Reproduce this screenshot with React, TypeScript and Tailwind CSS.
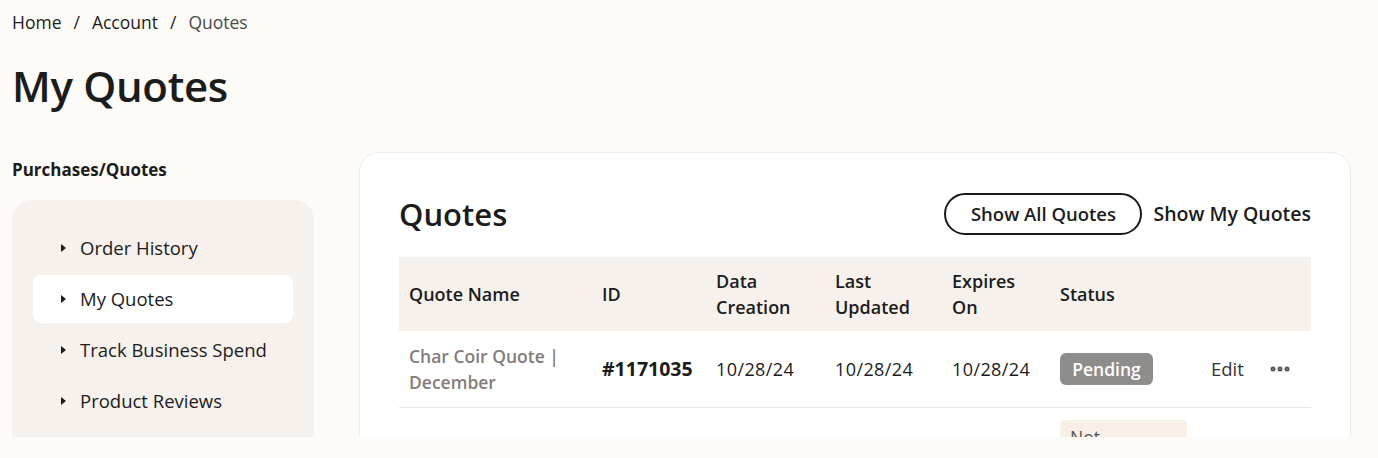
import { MoreHorizontal } from "lucide-react";

const navItems = ["Order History", "My Quotes", "Track Business Spend", "Product Reviews"];

const columns = [
  { label: "Quote Name", w: "w-[193px]" },
  { label: "ID", w: "w-[114px]" },
  { label: "Data Creation", w: "w-[119px]" },
  { label: "Last Updated", w: "w-[117px]" },
  { label: "Expires On", w: "w-[108px]" },
  { label: "Status", w: "w-[151px]" },
];

function Caret() {
  return (
    <svg width="7" height="10" viewBox="0 0 7 10" className="shrink-0">
      <path d="M1 1 L6 5 L1 9 Z" fill="#1a1a1a" />
    </svg>
  );
}

export default function App() {
  return (
    <div className="h-[458px] w-full bg-[#fcfbf8] text-[#1c1c1c]" style={{ fontFamily: '"Open Sans", "Noto Sans", sans-serif' }}>
      <div className="h-[437px] overflow-hidden px-3 pt-[10px]">
        <nav className="flex items-center gap-[12px] text-[17.5px] leading-6">
          <span>Home</span>
          <span>/</span>
          <span>Account</span>
          <span>/</span>
          <span className="text-[#4a4a4a]">Quotes</span>
        </nav>
        <h1 className="mt-[28px] text-[42px] font-semibold leading-[48px] tracking-[-0.3px]">My Quotes</h1>

        <div className="mt-[42px] flex gap-[45px]">
          <aside className="w-[302px] shrink-0">
            <p className="mt-[6px] text-[17px] font-bold leading-6">Purchases/Quotes</p>
            <div className="mt-[18px] rounded-[20px] bg-[#f6f1ec] px-[21px] pt-[24px] pb-16">
              <ul className="flex flex-col gap-[3px]">
                {navItems.map((item) => (
                  <li
                    key={item}
                    className={`flex h-[48px] items-center gap-[13px] rounded-[8px] pl-[27px] text-[18.5px] ${
                      item === "My Quotes" ? "bg-white" : ""
                    }`}
                  >
                    <Caret />
                    <span>{item}</span>
                  </li>
                ))}
              </ul>
            </div>
          </aside>

          <section className="h-[400px] w-[992px] rounded-[20px] border border-[#efebe6] bg-white px-[39px] pt-[40px]">
            <div className="flex items-center justify-between">
              <h2 className="text-[31px] font-semibold leading-9">Quotes</h2>
              <div className="flex items-center gap-[11px]">
                <button className="h-[42px] w-[198px] rounded-full border-2 border-[#1a1a1a] text-[18.5px] font-semibold">
                  Show All Quotes
                </button>
                <button className="text-[19.5px] font-semibold">Show My Quotes</button>
              </div>
            </div>

            <div className="mt-[22px]">
              <div className="flex h-[74px] items-center bg-[#f6f1ec] pl-[10px] text-[18px] font-semibold leading-[26px]">
                {columns.map((c) => (
                  <div key={c.label} className={`${c.w} pr-3`}>
                    {c.label === "Quote Name" || c.label === "ID" || c.label === "Status" ? (
                      c.label
                    ) : (
                      <>
                        {c.label.split(" ")[0]}
                        <br />
                        {c.label.split(" ")[1]}
                      </>
                    )}
                  </div>
                ))}
              </div>

              <div className="flex h-[77px] items-center border-b border-[#ebe7e2] pl-[10px] text-[18px]">
                <div className="w-[193px] pr-3 text-[17.5px] font-semibold leading-[26px] text-[#857b7b]">
                  Char Coir Quote |<br />
                  December
                </div>
                <div className="w-[114px] text-[19.5px] font-bold">#1171035</div>
                <div className="w-[119px] tracking-[0.4px]">10/28/24</div>
                <div className="w-[117px] tracking-[0.4px]">10/28/24</div>
                <div className="w-[108px] tracking-[0.4px]">10/28/24</div>
                <div className="w-[151px]">
                  <span className="inline-flex h-[32px] w-[93px] items-center justify-center rounded-[6px] bg-[#8f8d8b] text-[17.5px] font-semibold text-white">
                    Pending
                  </span>
                </div>
                <div className="text-[18.5px] text-[#333]">Edit</div>
                <MoreHorizontal className="ml-[24px] h-6 w-6 text-[#555]" strokeWidth={3} />
              </div>

              <div className="flex pl-[10px] pt-[12px]">
                <div className="ml-[651px] h-[40px] w-[127px] rounded-[4px] bg-[#f8efe6] px-[10px] pt-[4px] text-[17.5px] text-[#555]">
                  Not
                </div>
              </div>
            </div>
          </section>
        </div>
      </div>
    </div>
  );
}
